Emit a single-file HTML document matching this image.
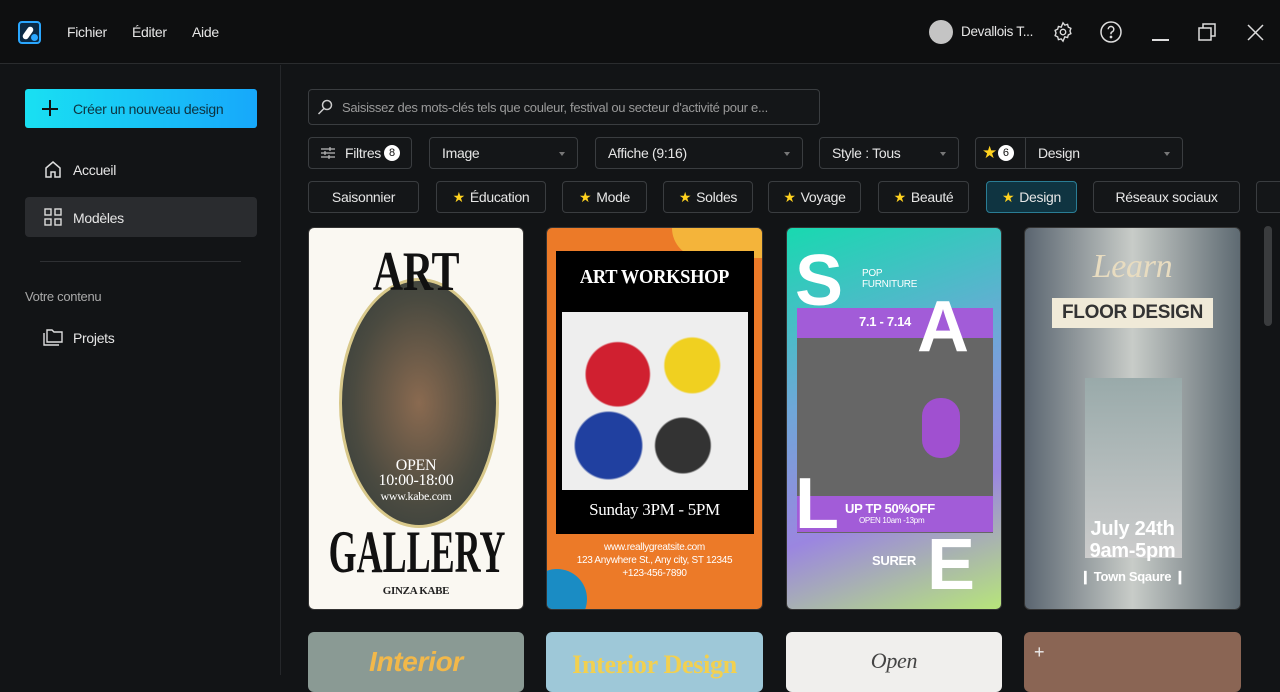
<!DOCTYPE html>
<html><head><meta charset="utf-8"><style>
*{box-sizing:border-box;margin:0;padding:0}
body{width:1280px;height:675px;overflow:hidden;background:#121416;font-family:"Liberation Sans",sans-serif;color:#e8e8e8;position:relative;letter-spacing:-0.3px}
.abs{position:absolute}
.hdr{left:0;top:0;width:1280px;height:64px;background:#0e0f10;border-bottom:1px solid #2a2c2e}
.side{left:0;top:65px;width:281px;height:610px;background:#121416;border-right:1px solid #25272a}
.t{font-size:14px;color:#e6e6e6;white-space:nowrap}
.box{position:absolute;border:1px solid #3a3d40;border-radius:4px;background:#141618;height:32px;font-size:14px;color:#e6e6e6;display:flex;align-items:center;white-space:nowrap}
.chip{justify-content:center;top:181px}
.dd::after{content:"";position:absolute;right:12px;top:14px;border:3px solid transparent;border-top:4px solid #777}
.star{color:#ffd21f;margin-right:5px;font-size:14px}
.card{position:absolute;top:227px;height:383px;border-radius:6px;overflow:hidden;border:1px solid #333}
.card2{position:absolute;top:632px;height:60px;border-radius:6px;overflow:hidden}
.badge{display:inline-block;width:16px;height:16px;border-radius:8px;background:#fff;color:#111;font-size:11px;text-align:center;line-height:16px;margin-left:3px;letter-spacing:0}
</style></head><body>
<div class="abs hdr"></div>
<div class="abs" style="left:18px;top:21px;width:23px;height:23px;border:2px solid #2aa7ff;border-radius:4px;background:#0b2a45"><div style="position:absolute;left:5px;top:3px;width:6px;height:14px;background:#fff;border-radius:3px;transform:rotate(35deg)"></div><div style="position:absolute;left:11px;top:11px;width:7px;height:7px;background:#2aa7ff;border-radius:50%"></div></div>
<div class="abs t" style="left:67px;top:24px">Fichier</div>
<div class="abs t" style="left:132px;top:24px">Éditer</div>
<div class="abs t" style="left:192px;top:24px">Aide</div>
<div class="abs" style="left:929px;top:20px;width:24px;height:24px;border-radius:50%;background:#c4c4c4"></div>
<div class="abs t" style="left:961px;top:24px;font-size:13.5px">Devallois T...</div>
<svg class="abs" style="left:1052px;top:21px" width="22" height="22" viewBox="0 0 24 24" fill="none" stroke="#ddd" stroke-width="1.5"><path d="M12 2l2 2.5 3-.8.8 3 2.8 1.3-1 2.9 1 2.9-2.8 1.3-.8 3-3-.8L12 22l-2-2.5-3 .8-.8-3L3.4 16l1-2.9-1-2.9 2.8-1.3.8-3 3 .8z"/><circle cx="12" cy="12" r="3"/></svg>
<svg class="abs" style="left:1099px;top:20px" width="24" height="24" viewBox="0 0 24 24" fill="none" stroke="#ddd" stroke-width="1.5"><circle cx="12" cy="12" r="10"/><path d="M9.2 9.3a2.8 2.8 0 1 1 3.8 2.6c-.7.3-1 .9-1 1.6v.8"/><circle cx="12" cy="17" r=".6" fill="#ddd"/></svg>
<div class="abs" style="left:1152px;top:39px;width:17px;height:1.5px;background:#ddd"></div>
<svg class="abs" style="left:1197px;top:22px" width="20" height="20" viewBox="0 0 20 20" fill="none" stroke="#ddd" stroke-width="1.5"><rect x="2" y="6" width="12" height="12"/><path d="M6 6V2h12v12h-4"/></svg>
<svg class="abs" style="left:1247px;top:24px" width="17" height="17" viewBox="0 0 17 17" stroke="#ddd" stroke-width="1.5"><path d="M1 1l15 15M16 1L1 16"/></svg>

<div class="abs side"></div>
<div class="abs" style="left:25px;top:89px;width:232px;height:39px;border-radius:3px;background:linear-gradient(90deg,#19e0f2,#17a8fb)"></div>
<div class="abs" style="left:42px;top:108px;width:16px;height:1.6px;background:#111"></div>
<div class="abs" style="left:49px;top:100px;width:1.6px;height:16px;background:#111"></div>
<div class="abs" style="left:73px;top:101px;font-size:14px;color:#0d3340">Créer un nouveau design</div>
<svg class="abs" style="left:44px;top:160px" width="18" height="18" viewBox="0 0 18 18" fill="none" stroke="#ddd" stroke-width="1.5"><path d="M2 8L9 2l7 6v9h-5v-5H7v5H2z"/></svg>
<div class="abs t" style="left:73px;top:162px">Accueil</div>
<div class="abs" style="left:25px;top:197px;width:232px;height:40px;border-radius:4px;background:#2a2c2f"></div>
<svg class="abs" style="left:44px;top:208px" width="18" height="18" viewBox="0 0 18 18" fill="none" stroke="#ddd" stroke-width="1.4"><rect x="1" y="1" width="6" height="6"/><rect x="11" y="1" width="6" height="6"/><rect x="1" y="11" width="6" height="6"/><rect x="11" y="11" width="6" height="6"/></svg>
<div class="abs t" style="left:73px;top:210px">Modèles</div>
<div class="abs" style="left:40px;top:261px;width:201px;height:1px;background:#2e3033"></div>
<div class="abs" style="left:25px;top:289px;font-size:13px;color:#a8a8a8">Votre contenu</div>
<svg class="abs" style="left:43px;top:329px" width="20" height="17" viewBox="0 0 20 17" fill="none" stroke="#ddd" stroke-width="1.4"><path d="M1 4v12h15"/><path d="M4 1h5l2 2h8v10H4z"/></svg>
<div class="abs t" style="left:73px;top:330px">Projets</div>

<div class="box" style="left:308px;top:89px;width:512px;height:36px;padding-left:33px;color:#9a9a9a;font-size:13px;overflow:hidden">Saisissez des mots-clés tels que couleur, festival ou secteur d'activité pour e...</div>
<svg class="abs" style="left:317px;top:99px" width="16" height="16" viewBox="0 0 16 16" fill="none" stroke="#ccc" stroke-width="1.5"><circle cx="10" cy="6" r="4.5"/><path d="M7 9.5L1.5 15"/></svg>

<div class="box" style="left:308px;top:137px;width:104px;padding-left:36px">Filtres<span class="badge">8</span></div>
<svg class="abs" style="left:320px;top:146px" width="16" height="14" viewBox="0 0 16 14" stroke="#bbb" stroke-width="1.2"><path d="M1 3h14M1 7h14M1 11h14"/><path d="M10 1v4M5 5v4M9 9v4"/></svg>
<div class="box dd" style="left:429px;top:137px;width:149px;padding-left:12px">Image</div>
<div class="box dd" style="left:595px;top:137px;width:208px;padding-left:12px">Affiche (9:16)</div>
<div class="box dd" style="left:819px;top:137px;width:140px;padding-left:12px">Style : Tous</div>
<div class="box dd" style="left:975px;top:137px;width:208px;padding-left:6px"><span style="color:#ffd21f;font-size:17px">★</span><span class="badge" style="margin-left:1px">6</span><span style="position:absolute;left:49px;top:0;width:1px;height:30px;background:#3a3d40"></span><span style="position:absolute;left:62px">Design</span></div>

<div class="box chip" style="left:308px;width:111px">Saisonnier</div>
<div class="box chip" style="left:436px;width:110px"><span class="star">★</span>Éducation</div>
<div class="box chip" style="left:562px;width:85px"><span class="star">★</span>Mode</div>
<div class="box chip" style="left:663px;width:90px"><span class="star">★</span>Soldes</div>
<div class="box chip" style="left:768px;width:93px"><span class="star">★</span>Voyage</div>
<div class="box chip" style="left:878px;width:91px"><span class="star">★</span>Beauté</div>
<div class="box chip" style="left:986px;width:91px;background:#0f3441;border-color:#2a7d95"><span class="star">★</span>Design</div>
<div class="box chip" style="left:1093px;width:147px">Réseaux sociaux</div>
<div class="box chip" style="left:1256px;width:30px"></div>
<div class="abs" style="left:1264px;top:226px;width:8px;height:100px;border-radius:4px;background:#3a3c3e"></div>

<div class="card" style="left:308px;width:216px;background:#faf8f2">
 <div style="position:absolute;left:30px;top:50px;width:160px;height:250px;border-radius:50%;background:radial-gradient(#8a6a50,#4a4a40 60%,#2f3a3a);border:3px solid #d8c88a"></div>
 <div style="position:absolute;width:100%;top:12px;text-align:center;font-family:'Liberation Serif',serif;font-size:56px;font-weight:bold;color:#111;transform:scaleX(.75)">ART</div>
 <div style="position:absolute;width:100%;top:230px;text-align:center;font-family:'Liberation Serif',serif;font-size:16px;color:#fff;line-height:15px">OPEN<br>10:00-18:00<br><span style="font-size:12px">www.kabe.com</span></div>
 <div style="position:absolute;left:-60px;width:336px;top:290px;text-align:center;white-space:nowrap;font-family:'Liberation Serif',serif;font-size:60px;font-weight:bold;color:#111;transform:scaleX(.6);letter-spacing:0">GALLERY</div>
 <div style="position:absolute;width:100%;top:357px;text-align:center;font-family:'Liberation Serif',serif;font-size:11px;font-weight:bold;color:#222">GINZA KABE</div>
</div>
<div class="card" style="left:546px;width:217px;background:#ec7a28">
 <div style="position:absolute;right:0;top:0;width:90px;height:30px;background:#f4b43a;border-radius:0 0 0 30px"></div>
 <div style="position:absolute;left:-20px;bottom:-20px;width:60px;height:60px;border-radius:50%;background:#1a8cc4"></div>
 <div style="position:absolute;left:9px;top:23px;width:198px;height:283px;background:#000"></div>
 <div style="position:absolute;width:100%;left:0;top:38px;text-align:center;font-family:'Liberation Serif',serif;font-size:20px;font-weight:bold;color:#fff;transform:scaleX(.92)">ART WORKSHOP</div>
 <div style="position:absolute;left:15px;top:84px;width:186px;height:178px;background:radial-gradient(circle at 30% 35%,#d02030 0 18%,transparent 19%),radial-gradient(circle at 70% 30%,#f0d020 0 15%,transparent 16%),radial-gradient(circle at 25% 75%,#2040a0 0 17%,transparent 18%),radial-gradient(circle at 65% 75%,#333 0 15%,transparent 16%),#eee"></div>
 <div style="position:absolute;width:100%;top:272px;text-align:center;font-family:'Liberation Serif',serif;font-size:17px;color:#fff">Sunday 3PM - 5PM</div>
 <div style="position:absolute;width:100%;top:313px;text-align:center;font-size:10px;color:#fff;line-height:13px">www.reallygreatsite.com<br>123 Anywhere St., Any city, ST 12345<br>+123-456-7890</div>
</div>
<div class="card" style="left:786px;width:216px;background:linear-gradient(160deg,#18d9b0,#6fa7d8 40%,#9b86e0 70%,#b7e57a)">
 <div style="position:absolute;left:10px;top:80px;width:196px;height:225px;background:#666"></div>
 <div style="position:absolute;left:10px;top:80px;width:196px;height:30px;background:#a25cd8"></div>
 <div style="position:absolute;left:10px;top:268px;width:196px;height:36px;background:#a25cd8"></div>
 <div style="position:absolute;left:8px;top:12px;font-size:72px;font-weight:bold;color:#fff">S</div>
 <div style="position:absolute;left:75px;top:40px;font-size:10px;color:#fff">POP<br>FURNITURE</div>
 <div style="position:absolute;left:72px;top:86px;font-size:13px;font-weight:bold;color:#fff">7.1 - 7.14</div>
 <div style="position:absolute;left:130px;top:58px;font-size:72px;font-weight:bold;color:#fff">A</div>
 <div style="position:absolute;left:135px;top:170px;width:38px;height:60px;border-radius:18px;background:#a050d0"></div>
 <div style="position:absolute;left:8px;top:235px;font-size:72px;font-weight:bold;color:#fff">L</div>
 <div style="position:absolute;left:58px;top:273px;font-size:13px;font-weight:bold;color:#fff">UP TP 50%OFF</div>
 <div style="position:absolute;left:72px;top:288px;font-size:8px;color:#fff">OPEN 10am -13pm</div>
 <div style="position:absolute;left:85px;top:325px;font-size:13px;font-weight:bold;color:#fff">SURER</div>
 <div style="position:absolute;left:140px;top:296px;font-size:72px;font-weight:bold;color:#fff">E</div>
</div>
<div class="card" style="left:1024px;width:217px;background:linear-gradient(90deg,#5a6570,#c8ccc8 50%,#5e6a72)">
 <div style="position:absolute;left:60px;top:150px;width:97px;height:180px;background:linear-gradient(#9aa,#ccc)"></div>
 <div style="position:absolute;width:100%;top:20px;text-align:center;font-family:'Liberation Serif',serif;font-style:italic;font-size:34px;color:#e8dcc0">Learn</div>
 <div style="position:absolute;left:27px;top:70px;width:161px;height:30px;background:#f0ead8;text-align:center;font-size:19px;font-weight:bold;color:#333;line-height:30px">FLOOR DESIGN</div>
 <div style="position:absolute;width:100%;top:290px;text-align:center;font-size:20px;font-weight:bold;color:#fff;line-height:22px">July 24th<br>9am-5pm</div>
 <div style="position:absolute;width:100%;top:341px;text-align:center;font-size:13px;font-weight:bold;color:#fff">❙ Town Sqaure ❙</div>
</div>

<div class="card2" style="left:308px;width:216px;background:#8a9a94"><div style="margin-top:14px;text-align:center;font-size:28px;font-weight:bold;font-style:italic;color:#f2b84a">Interior</div></div>
<div class="card2" style="left:546px;width:217px;background:#9ec8d8"><div style="margin-top:18px;text-align:center;font-family:'Liberation Serif',serif;font-size:26px;font-weight:bold;color:#f2d050">Interior Design</div></div>
<div class="card2" style="left:786px;width:216px;background:#f0efed"><div style="margin-top:16px;text-align:center;font-family:'Liberation Serif',serif;font-style:italic;font-size:22px;color:#444">Open</div></div>
<div class="card2" style="left:1024px;width:217px;background:#8a6554"><div style="position:absolute;left:10px;top:10px;color:#eee;font-size:18px">+</div></div>
</body></html>
